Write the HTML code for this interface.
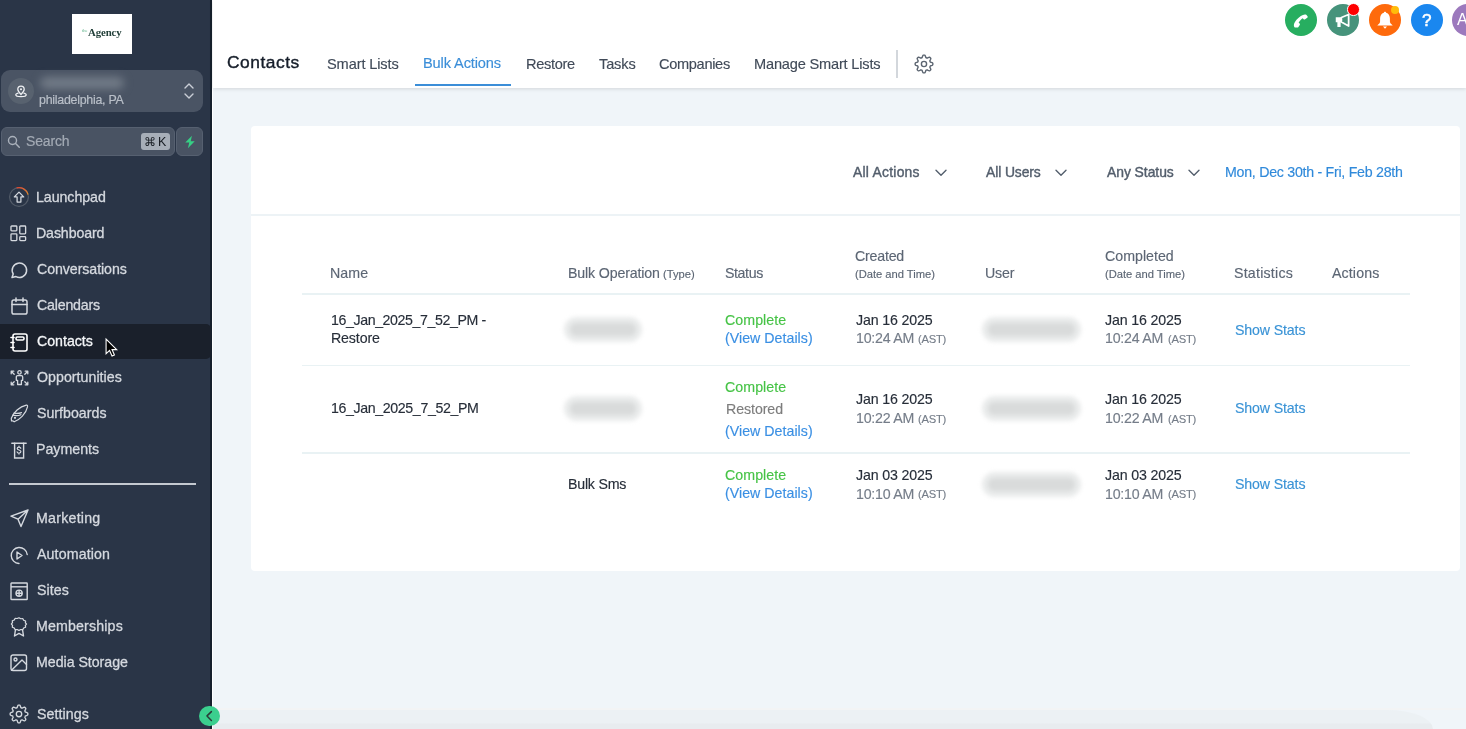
<!DOCTYPE html>
<html><head><meta charset="utf-8">
<style>
*{box-sizing:border-box;margin:0;padding:0}
html,body{width:1466px;height:729px;overflow:hidden;background:#f0f5f9;font-family:"Liberation Sans",sans-serif;position:relative}
.a{position:absolute}
.t{position:absolute;line-height:1;white-space:pre;font-family:"Liberation Sans",sans-serif;will-change:transform}
svg.i{position:absolute;overflow:visible}
.ns{fill:none;stroke:#d5d9df;stroke-width:1.5;stroke-linecap:round;stroke-linejoin:round}
.blob{position:absolute;background:#d9d9d9;filter:blur(4px);border-radius:10px}

</style></head>
<body>
<!-- sidebar -->
<div class="a" style="left:0;top:0;width:211px;height:729px;background:#2a3547"></div>
<div class="a" style="left:210.3px;top:0;width:1.5px;height:729px;background:#16202c"></div>
<div class="a" style="left:211.8px;top:0;width:1.2px;height:729px;background:#ffffff"></div>
<!-- logo -->
<div class="a" style="left:72px;top:14px;width:60px;height:40px;background:#fff"></div>
<div class="t" style="left:82px;top:28.6px;font-size:4.6px;color:#5fb38a;font-family:'Liberation Serif',serif">the</div>
<div class="t" style="left:87.8px;top:26.6px;font-size:10.8px;font-weight:bold;color:#23403a;font-family:'Liberation Serif',serif;letter-spacing:-0.1px">Agency</div>
<!-- location -->
<div class="a" style="left:1px;top:70px;width:202px;height:41.5px;border-radius:9px;background:#4a5464"></div>
<div class="a" style="left:8px;top:78px;width:26px;height:26px;border-radius:50%;background:#58626f"></div>
<svg class="i" style="left:14px;top:84px" width="14" height="14" viewBox="0 0 24 24"><path d="M12 3.5a5.5 5.5 0 0 0-5.5 5.5c0 3.5 5.5 9 5.5 9s5.5-5.5 5.5-9A5.5 5.5 0 0 0 12 3.5z" fill="none" stroke="#eef0f3" stroke-width="2.2"/><circle cx="12" cy="9" r="1.8" fill="#eef0f3"/><path d="M7 15.5c-2.5.6-4 1.6-4 2.8 0 1.9 4 3.2 9 3.2s9-1.3 9-3.2c0-1.2-1.5-2.2-4-2.8" fill="none" stroke="#eef0f3" stroke-width="2.2" stroke-linecap="round"/></svg>
<div class="blob" style="left:40px;top:77px;width:84px;height:12px;background:#727b87;filter:blur(4px);border-radius:8px"></div>
<svg class="i" style="left:183px;top:82px" width="12" height="18" viewBox="0 0 12 18"><path d="M2 6l4-4 4 4M2 12l4 4 4-4" fill="none" stroke="#c9ced6" stroke-width="1.4" stroke-linecap="round" stroke-linejoin="round"/></svg>
<!-- search -->
<div class="a" style="left:1px;top:127px;width:174px;height:28.5px;border-radius:6px;background:#495363;border:1px solid #566070"></div>
<svg class="i" style="left:7px;top:134.5px" width="14" height="14" viewBox="0 0 16 16"><circle cx="6.3" cy="6.3" r="4.6" fill="none" stroke="#aab1bb" stroke-width="1.6"/><path d="M9.8 9.8l4.2 4.2" stroke="#aab1bb" stroke-width="1.7" stroke-linecap="round"/></svg>
<div class="a" style="left:141px;top:133px;width:29px;height:16.5px;border-radius:3px;background:#a7aeb8"></div>
<div class="t" style="left:144px;top:135.5px;font-size:12px;color:#161b22">&#8984;</div>
<div class="t" style="left:158px;top:135.5px;font-size:12.5px;color:#161b22">K</div>
<div class="a" style="left:176px;top:127px;width:27px;height:28.5px;border-radius:6px;background:#495363;border:1px solid #566070"></div>
<svg class="i" style="left:182.5px;top:134.5px" width="14" height="14" viewBox="0 0 16 16"><path d="M10.2 0.8L2.6 8.6h4.6l-1.6 6.6 7.8-8.2H8.8z" fill="#36cf85"/></svg>
<!-- active nav -->
<div class="a" style="left:0;top:323.6px;width:210.6px;height:35.2px;background:#1a202b;border-radius:0 5px 5px 0"></div>
<!-- divider -->
<div class="a" style="left:9px;top:483px;width:186.5px;height:2px;background:#c4c9d0"></div>
<!-- collapse -->


<!-- nav icons -->
<svg class="i" style="left:8.8px;top:187.4px" width="20" height="20" viewBox="0 0 20 20"><defs><linearGradient id="lg" x1="0" y1="0" x2="1" y2="1"><stop offset="0" stop-color="#e2452f"/><stop offset="1" stop-color="#dd8a2c"/></linearGradient></defs><circle cx="10" cy="10" r="9.4" fill="none" stroke="#535c69" stroke-width="1.2"/><path d="M7.57 0.92A9.4 9.4 0 0 1 19.08 7.57" fill="none" stroke="url(#lg)" stroke-width="1.3"/><path d="M10 5.1L5.3 9.9h2.8v5.2h3.8V9.9h2.8z" fill="none" stroke="#d5d9df" stroke-width="1.25" stroke-linejoin="round"/></svg>
<svg class="i" style="left:10.4px;top:225px" width="16.6" height="16.6" viewBox="0 0 17 17"><g fill="none" stroke="#d5d9df" stroke-width="1.35"><rect x="1" y="1" width="6" height="5" rx="0.8"/><rect x="10" y="1" width="6" height="8" rx="0.8"/><rect x="1" y="9" width="6" height="7" rx="0.8"/><rect x="10" y="12" width="6" height="4" rx="0.8"/></g></svg>
<svg class="i" style="left:10px;top:261px" width="18" height="18" viewBox="0 0 18 18"><path d="M2 16.5l1.2-3.6A7.2 7.2 0 1 1 6 15.6z" fill="none" stroke="#d5d9df" stroke-width="1.5" stroke-linejoin="round"/></svg>
<svg class="i" style="left:10.5px;top:296.5px" width="17" height="18" viewBox="0 0 17 18"><g fill="none" stroke="#d5d9df" stroke-width="1.5" stroke-linecap="round"><rect x="1" y="3" width="15" height="14" rx="1.8"/><path d="M1 7.5h15M5 1v3.5M12 1v3.5"/></g></svg>
<svg class="i" style="left:9.5px;top:332.5px" width="18" height="19" viewBox="0 0 18 19"><g fill="none" stroke="#ffffff" stroke-width="1.6" stroke-linecap="round"><rect x="3" y="1" width="14" height="17" rx="2"/><rect x="6" y="4" width="8" height="3" rx="1.2"/><path d="M1 4.5h3M1 9.5h3M1 14.5h3"/></g></svg>
<svg class="i" style="left:9.5px;top:369.5px" width="19" height="16" viewBox="0 0 19 16"><g fill="none" stroke="#d5d9df" stroke-width="1.3" stroke-linecap="round" stroke-linejoin="round"><circle cx="9.5" cy="2.4" r="1.7"/><path d="M7.6 5.6h3.8a1.3 1.3 0 0 1 1.3 1.3v3.4h-1.3v4.2h-3.8v-4.2h-1.3V6.9a1.3 1.3 0 0 1 1.3-1.3z"/><path d="M1.2 1.2l3 3M1.2 1.2h2.6M1.2 1.2v2.6M17.8 1.2l-3 3M17.8 1.2h-2.6M17.8 1.2v2.6M1.2 14.8l3-3M1.2 14.8h2.6M1.2 14.8v-2.6M17.8 14.8l-3-3M17.8 14.8h-2.6M17.8 14.8v-2.6"/></g></svg>
<svg class="i" style="left:10px;top:404px" width="18" height="19" viewBox="0 0 18 19"><g fill="none" stroke="#d5d9df" stroke-width="1.2" stroke-linecap="round" stroke-linejoin="round"><path d="M1.3 14.2C3.5 8.5 9.5 2.5 16.3 1.1c1.2-.2 1.4.6 1.2 1.8C16 9.8 9.8 15.6 4.2 17.8l-1.2-.9-1.5.1z"/><path d="M2.6 11.2c2.2.5 5.3.9 8.3-.5M4 9.2c2.3.4 5 .5 7.5-.6"/><circle cx="5" cy="13.8" r="0.5" fill="#d5d9df"/></g></svg>
<svg class="i" style="left:10.5px;top:441.5px" width="16" height="17" viewBox="0 0 16 17"><g fill="none" stroke="#d5d9df" stroke-width="1.4" stroke-linecap="round"><path d="M0.8 1.2h14.4"/><path d="M3.6 1.2v14.8h9V1.2"/><path d="M9.8 6.3c-.3-.8-1-1.2-1.8-1.2-1 0-1.8.6-1.8 1.4 0 1.9 3.7 1.1 3.7 3.1 0 .9-.8 1.5-1.9 1.5-.9 0-1.7-.5-1.9-1.3M8 4.1v1M8 11.1v1" stroke-width="1.2"/></g></svg>
<svg class="i" style="left:9.5px;top:509px" width="19" height="19" viewBox="0 0 19 19"><path d="M18 1L1 7.2l7 3 3 7.3z M18 1L8 10.2" fill="none" stroke="#d5d9df" stroke-width="1.4" stroke-linejoin="round" stroke-linecap="round"/></svg>
<svg class="i" style="left:9.5px;top:545.5px" width="18" height="19" viewBox="0 0 18 19"><g fill="none" stroke="#d5d9df" stroke-width="1.4" stroke-linecap="round" stroke-linejoin="round"><path d="M17.2 8.5A8 8 0 1 0 9 17.5"/><path d="M7 6l5 3.5-5 3.5z"/></g></svg>
<svg class="i" style="left:9.5px;top:582px" width="18" height="18" viewBox="0 0 18 18"><g fill="none" stroke="#d5d9df" stroke-width="1.4"><rect x="1" y="1" width="16.2" height="16.5" rx="0.5"/><path d="M1 4.8h16.2"/><circle cx="9.1" cy="11.2" r="3.1"/><path d="M6 11.2h6.2M9.1 8.1v6.2"/></g></svg>
<svg class="i" style="left:11px;top:617px" width="16" height="20" viewBox="0 0 16 20"><g fill="none" stroke="#d5d9df" stroke-width="1.4" stroke-linejoin="round"><path d="M8 1l1.9 1.3 2.3-.2.9 2.1 2.1 1-.2 2.3L16.3 9l-1.3 1.8.2 2.3-2.1 1-.9 2.1-2.3-.2L8 17.3 6.1 16l-2.3.2-.9-2.1-2.1-1 .2-2.3L-.3 9 1 7.2.8 4.9l2.1-1 .9-2.1 2.3.2z" transform="translate(0.6 0) scale(0.92 0.78)"/><path d="M4.5 12.5L3.5 19l4.5-2.6 4.5 2.6-1-6.5"/></g></svg>
<svg class="i" style="left:10.1px;top:653.8px" width="17" height="17" viewBox="0 0 17 17"><g fill="none" stroke="#d5d9df" stroke-width="1.4" stroke-linejoin="round" stroke-linecap="round"><rect x="1" y="1" width="15.5" height="15.5" rx="2"/><circle cx="5.5" cy="5.5" r="1.5"/><path d="M16.5 10.5L12 6 1.5 16.3"/></g></svg>
<svg class="i" style="left:8.65px;top:704.3px" width="20" height="20" viewBox="0 0 20 20"><g fill="none" stroke="#d5d9df" stroke-width="1.35" stroke-linejoin="round"><path d="M18.85 10.00 L18.84 10.46 L18.73 10.92 L18.10 11.28 L17.37 11.57 L16.66 11.78 L16.23 12.02 L16.11 12.35 L15.98 12.66 L15.84 12.97 L15.97 13.45 L16.32 14.10 L16.63 14.82 L16.82 15.52 L16.58 15.92 L16.26 16.26 L15.92 16.58 L15.52 16.82 L14.82 16.63 L14.10 16.32 L13.45 15.97 L12.97 15.84 L12.66 15.98 L12.35 16.11 L12.02 16.23 L11.78 16.66 L11.57 17.37 L11.28 18.10 L10.92 18.73 L10.46 18.84 L10.00 18.85 L9.54 18.84 L9.08 18.73 L8.72 18.10 L8.43 17.37 L8.22 16.66 L7.98 16.23 L7.65 16.11 L7.34 15.98 L7.03 15.84 L6.55 15.97 L5.90 16.32 L5.18 16.63 L4.48 16.82 L4.08 16.58 L3.74 16.26 L3.42 15.92 L3.18 15.52 L3.37 14.82 L3.68 14.10 L4.03 13.45 L4.16 12.97 L4.02 12.66 L3.89 12.35 L3.77 12.02 L3.34 11.78 L2.63 11.57 L1.90 11.28 L1.27 10.92 L1.16 10.46 L1.15 10.00 L1.16 9.54 L1.27 9.08 L1.90 8.72 L2.63 8.43 L3.34 8.22 L3.77 7.98 L3.89 7.65 L4.02 7.34 L4.16 7.03 L4.03 6.55 L3.68 5.90 L3.37 5.18 L3.18 4.48 L3.42 4.08 L3.74 3.74 L4.08 3.42 L4.48 3.18 L5.18 3.37 L5.90 3.68 L6.55 4.03 L7.03 4.16 L7.34 4.02 L7.65 3.89 L7.98 3.77 L8.22 3.34 L8.43 2.63 L8.72 1.90 L9.08 1.27 L9.54 1.16 L10.00 1.15 L10.46 1.16 L10.92 1.27 L11.28 1.90 L11.57 2.63 L11.78 3.34 L12.02 3.77 L12.35 3.89 L12.66 4.02 L12.97 4.16 L13.45 4.03 L14.10 3.68 L14.82 3.37 L15.52 3.18 L15.92 3.42 L16.26 3.74 L16.58 4.08 L16.82 4.48 L16.63 5.18 L16.32 5.90 L15.97 6.55 L15.84 7.03 L15.98 7.34 L16.11 7.65 L16.23 7.98 L16.66 8.22 L17.37 8.43 L18.10 8.72 L18.73 9.08 L18.84 9.54Z"/><circle cx="10" cy="10" r="2.7"/></g></svg>
<!-- cursor -->
<svg class="i" style="left:105.3px;top:338.3px" width="13" height="19.5" viewBox="0 0 12 18"><path d="M1 1v13.5l3.2-3 2.3 5.2 2.2-1-2.2-5h4.3z" fill="#000" stroke="#fff" stroke-width="1" stroke-linejoin="miter"/></svg>
<!-- topbar -->
<div class="a" style="left:213px;top:0;width:1253px;height:88px;background:#fff;box-shadow:0 1px 4px rgba(0,0,0,0.13)"></div>
<div class="a" style="left:415px;top:84px;width:96px;height:2px;background:#3b8ed8"></div>
<div class="a" style="left:896.2px;top:50px;width:2px;height:28px;background:#d3d7dc"></div>
<svg class="i" style="left:913.5px;top:54.2px" width="20" height="20" viewBox="0 0 20 20"><g fill="none" stroke="#5b6470" stroke-width="1.4" stroke-linejoin="round"><path d="M18.85 10.00 L18.84 10.46 L18.73 10.92 L18.10 11.28 L17.37 11.57 L16.66 11.78 L16.23 12.02 L16.11 12.35 L15.98 12.66 L15.84 12.97 L15.97 13.45 L16.32 14.10 L16.63 14.82 L16.82 15.52 L16.58 15.92 L16.26 16.26 L15.92 16.58 L15.52 16.82 L14.82 16.63 L14.10 16.32 L13.45 15.97 L12.97 15.84 L12.66 15.98 L12.35 16.11 L12.02 16.23 L11.78 16.66 L11.57 17.37 L11.28 18.10 L10.92 18.73 L10.46 18.84 L10.00 18.85 L9.54 18.84 L9.08 18.73 L8.72 18.10 L8.43 17.37 L8.22 16.66 L7.98 16.23 L7.65 16.11 L7.34 15.98 L7.03 15.84 L6.55 15.97 L5.90 16.32 L5.18 16.63 L4.48 16.82 L4.08 16.58 L3.74 16.26 L3.42 15.92 L3.18 15.52 L3.37 14.82 L3.68 14.10 L4.03 13.45 L4.16 12.97 L4.02 12.66 L3.89 12.35 L3.77 12.02 L3.34 11.78 L2.63 11.57 L1.90 11.28 L1.27 10.92 L1.16 10.46 L1.15 10.00 L1.16 9.54 L1.27 9.08 L1.90 8.72 L2.63 8.43 L3.34 8.22 L3.77 7.98 L3.89 7.65 L4.02 7.34 L4.16 7.03 L4.03 6.55 L3.68 5.90 L3.37 5.18 L3.18 4.48 L3.42 4.08 L3.74 3.74 L4.08 3.42 L4.48 3.18 L5.18 3.37 L5.90 3.68 L6.55 4.03 L7.03 4.16 L7.34 4.02 L7.65 3.89 L7.98 3.77 L8.22 3.34 L8.43 2.63 L8.72 1.90 L9.08 1.27 L9.54 1.16 L10.00 1.15 L10.46 1.16 L10.92 1.27 L11.28 1.90 L11.57 2.63 L11.78 3.34 L12.02 3.77 L12.35 3.89 L12.66 4.02 L12.97 4.16 L13.45 4.03 L14.10 3.68 L14.82 3.37 L15.52 3.18 L15.92 3.42 L16.26 3.74 L16.58 4.08 L16.82 4.48 L16.63 5.18 L16.32 5.90 L15.97 6.55 L15.84 7.03 L15.98 7.34 L16.11 7.65 L16.23 7.98 L16.66 8.22 L17.37 8.43 L18.10 8.72 L18.73 9.08 L18.84 9.54Z"/><circle cx="10" cy="10" r="2.6"/></g></svg>
<!-- top right -->
<div class="a" style="left:1284.6px;top:4.35px;width:32px;height:32px;border-radius:50%;background:#27ae60"></div>
<svg class="i" style="left:1291px;top:10.5px" width="20" height="20" viewBox="0 0 16 16"><path d="M3 13.2c-1.3-1.4-.7-3.8 1.6-6.4S10.3 2 12.2 3l1 1.2c.3.4.2.9-.2 1.2l-1.7 1.2c-.4.3-.9.2-1.2-.1l-.7-.8c-1.2.6-2.7 2.3-3.3 3.6l.8.7c.3.3.4.8.1 1.2L5.8 12.9c-.3.4-.8.5-1.2.2z" fill="#fff"/></svg>
<div class="a" style="left:1326.5px;top:4.35px;width:32px;height:32px;border-radius:50%;background:#46937b"></div>
<svg class="i" style="left:1333px;top:11px" width="20" height="20" viewBox="0 0 16 16"><path d="M2.2 5H6.6V9H6.1V12.7H3.5V9H2.2z" fill="#fff"/><path d="M6.7 5.2L12.5 2.8V12L6.7 8.8z" fill="none" stroke="#fff" stroke-width="1.4" stroke-linejoin="round"/></svg>
<div class="a" style="left:1347.45px;top:3.15px;width:12.5px;height:12.5px;border-radius:50%;background:#ff0000;border:1.2px solid #fff"></div>
<div class="a" style="left:1368.5px;top:4.35px;width:32px;height:32px;border-radius:50%;background:#fe6a0c"></div>
<svg class="i" style="left:1375.5px;top:11px" width="18" height="19" viewBox="0 0 16 17"><path d="M8 0.6c-.6 0-1 .4-1 .9C4.6 2.2 3.6 4.3 3.6 6.8v2.6c0 1.2-.9 2.2-2.5 3.5h13.8c-1.6-1.3-2.5-2.3-2.5-3.5V6.8c0-2.5-1-4.6-3.4-5.3 0-.5-.4-.9-1-.9z" fill="#fff"/><path d="M6.2 13.9h3.6L8 15.9z" fill="#fff"/></svg>
<div class="a" style="left:1390.5px;top:6.2px;width:8px;height:8px;border-radius:50%;background:#ffbc0a"></div>
<div class="a" style="left:1410.6px;top:4.35px;width:32px;height:32px;border-radius:50%;background:#1a87ef"></div>
<div class="t" style="left:1421.6px;top:12px;font-size:17px;color:#fff;-webkit-text-stroke:0.6px #fff">?</div>
<div class="a" style="left:1452.2px;top:4.35px;width:32px;height:32px;border-radius:50%;background:#9c79bd"></div>
<div class="t" style="left:1457px;top:11.5px;font-size:16px;color:#fff">A</div>
<!-- card -->
<div class="a" style="left:251.3px;top:125.8px;width:1208.7px;height:445.2px;background:#fff;border-radius:4px"></div>
<div class="a" style="left:251.3px;top:214px;width:1208.7px;height:1.5px;background:#edf3f6"></div>
<svg class="i" style="left:934.6px;top:169.2px" width="12" height="7.5" viewBox="0 0 12 7.5"><path d="M1 1.2l5 5 5-5" fill="none" stroke="#535e6c" stroke-width="1.4" stroke-linecap="round" stroke-linejoin="round"/></svg>
<svg class="i" style="left:1055.4px;top:169.2px" width="12" height="7.5" viewBox="0 0 12 7.5"><path d="M1 1.2l5 5 5-5" fill="none" stroke="#535e6c" stroke-width="1.4" stroke-linecap="round" stroke-linejoin="round"/></svg>
<svg class="i" style="left:1188.3px;top:169.2px" width="12" height="7.5" viewBox="0 0 12 7.5"><path d="M1 1.2l5 5 5-5" fill="none" stroke="#535e6c" stroke-width="1.4" stroke-linecap="round" stroke-linejoin="round"/></svg>
<!-- table borders -->
<div class="a" style="left:302px;top:293px;width:1108px;height:2px;background:#e9f2f4"></div>
<div class="a" style="left:302px;top:364.5px;width:1108px;height:1.5px;background:#e9f2f4"></div>
<div class="a" style="left:302px;top:452px;width:1108px;height:1.5px;background:#e9f2f4"></div>
<!-- blobs -->
<div class="blob" style="left:570px;top:323.2px;width:66px;height:13px;border-radius:7px;background:#d9dbdb;box-shadow:0 0 0 6px #e9ebeb;filter:blur(2.2px)"></div>
<div class="blob" style="left:570px;top:402.2px;width:66px;height:13px;border-radius:7px;background:#d9dbdb;box-shadow:0 0 0 6px #e9ebeb;filter:blur(2.2px)"></div>
<div class="blob" style="left:988px;top:323.2px;width:87px;height:13px;border-radius:7px;background:#d9dbdb;box-shadow:0 0 0 6px #e9ebeb;filter:blur(2.2px)"></div>
<div class="blob" style="left:988px;top:402.2px;width:87px;height:13px;border-radius:7px;background:#d9dbdb;box-shadow:0 0 0 6px #e9ebeb;filter:blur(2.2px)"></div>
<div class="blob" style="left:988px;top:477.7px;width:87px;height:13px;border-radius:7px;background:#d9dbdb;box-shadow:0 0 0 6px #e9ebeb;filter:blur(2.2px)"></div>
<!-- bottom band -->
<div class="a" style="left:213px;top:708px;width:1253px;height:1.5px;background:#f3f4f5"></div>
<div class="a" style="left:213px;top:710px;width:1220px;height:19px;background:linear-gradient(#ecf1f4 0,#ecf1f4 70%,#e8ecef 72%,#e8ecef 100%);border-top-right-radius:50px 21px"></div>

<div class="a" style="left:199.2px;top:705.6px;width:20.6px;height:20.6px;border-radius:50%;background:#3bcf8e"></div>
<svg class="i" style="left:203.5px;top:710px" width="12" height="12" viewBox="0 0 12 12"><path d="M7.4 1.6L3 5.9l4.4 4.6" fill="none" stroke="#2b3a37" stroke-width="1.5" stroke-linecap="round" stroke-linejoin="round"/></svg>

<div class="t" style="left:36.41px;top:190.18px;font-size:14.2px;color:#d5d9df;letter-spacing:-0.049px;-webkit-text-stroke:0.3px #d5d9df;">Launchpad</div>
<div class="t" style="left:36.41px;top:226.18px;font-size:14.2px;color:#d5d9df;letter-spacing:-0.123px;-webkit-text-stroke:0.3px #d5d9df;">Dashboard</div>
<div class="t" style="left:36.84px;top:262.18px;font-size:14.2px;color:#d5d9df;letter-spacing:-0.073px;-webkit-text-stroke:0.3px #d5d9df;">Conversations</div>
<div class="t" style="left:36.84px;top:298.18px;font-size:14.2px;color:#d5d9df;letter-spacing:-0.192px;-webkit-text-stroke:0.3px #d5d9df;">Calendars</div>
<div class="t" style="left:36.84px;top:334.18px;font-size:14.2px;color:#f4f6f8;letter-spacing:-0.022px;-webkit-text-stroke:0.3px #f4f6f8;">Contacts</div>
<div class="t" style="left:36.98px;top:370.18px;font-size:14.2px;color:#d5d9df;letter-spacing:0.032px;-webkit-text-stroke:0.3px #d5d9df;">Opportunities</div>
<div class="t" style="left:36.98px;top:406.18px;font-size:14.2px;color:#d5d9df;letter-spacing:0.009px;-webkit-text-stroke:0.3px #d5d9df;">Surfboards</div>
<div class="t" style="left:36.41px;top:442.18px;font-size:14.2px;color:#d5d9df;-webkit-text-stroke:0.3px #d5d9df;">Payments</div>
<div class="t" style="left:36.31px;top:511.28px;font-size:14.2px;color:#d5d9df;letter-spacing:0.242px;-webkit-text-stroke:0.3px #d5d9df;">Marketing</div>
<div class="t" style="left:37.45px;top:547.28px;font-size:14.2px;color:#d5d9df;letter-spacing:0.135px;-webkit-text-stroke:0.3px #d5d9df;">Automation</div>
<div class="t" style="left:36.88px;top:583.28px;font-size:14.2px;color:#d5d9df;letter-spacing:0.094px;-webkit-text-stroke:0.3px #d5d9df;">Sites</div>
<div class="t" style="left:36.31px;top:619.28px;font-size:14.2px;color:#d5d9df;letter-spacing:0.158px;-webkit-text-stroke:0.3px #d5d9df;">Memberships</div>
<div class="t" style="left:36.31px;top:655.28px;font-size:14.2px;color:#d5d9df;letter-spacing:-0.030px;-webkit-text-stroke:0.3px #d5d9df;">Media Storage</div>
<div class="t" style="left:36.88px;top:706.98px;font-size:14.2px;color:#d5d9df;letter-spacing:0.091px;-webkit-text-stroke:0.3px #d5d9df;">Settings</div>
<div class="t" style="left:38.86px;top:94.00px;font-size:12.4px;color:#b9bfc8;letter-spacing:-0.253px;-webkit-text-stroke:0.2px #b9bfc8;">philadelphia, PA</div>
<div class="t" style="left:25.74px;top:134.05px;font-size:14px;color:#a3aab4;letter-spacing:-0.162px;-webkit-text-stroke:0.2px #a3aab4;">Search</div>
<div class="t" style="left:227.13px;top:53.87px;font-size:17.4px;color:#161e2a;letter-spacing:0.504px;-webkit-text-stroke:0.4px #161e2a;">Contacts</div>
<div class="t" style="left:327.49px;top:56.94px;font-size:14.6px;color:#404a58;letter-spacing:-0.122px;-webkit-text-stroke:0.15px #404a58;">Smart Lists</div>
<div class="t" style="left:423.11px;top:55.94px;font-size:14.6px;color:#3b8ed8;letter-spacing:-0.123px;-webkit-text-stroke:0.15px #3b8ed8;">Bulk Actions</div>
<div class="t" style="left:525.81px;top:57.04px;font-size:14.6px;color:#404a58;letter-spacing:-0.342px;-webkit-text-stroke:0.15px #404a58;">Restore</div>
<div class="t" style="left:598.78px;top:57.04px;font-size:14.6px;color:#404a58;letter-spacing:-0.154px;-webkit-text-stroke:0.15px #404a58;">Tasks</div>
<div class="t" style="left:659.14px;top:57.04px;font-size:14.6px;color:#404a58;letter-spacing:-0.326px;-webkit-text-stroke:0.15px #404a58;">Companies</div>
<div class="t" style="left:753.51px;top:57.04px;font-size:14.6px;color:#404a58;letter-spacing:-0.185px;-webkit-text-stroke:0.15px #404a58;">Manage Smart Lists</div>
<div class="t" style="left:853.20px;top:165.53px;font-size:13.9px;color:#535e6c;letter-spacing:0.243px;-webkit-text-stroke:0.4px #535e6c;">All Actions</div>
<div class="t" style="left:986.40px;top:165.53px;font-size:13.9px;color:#535e6c;letter-spacing:-0.099px;-webkit-text-stroke:0.4px #535e6c;">All Users</div>
<div class="t" style="left:1107.10px;top:165.53px;font-size:13.9px;color:#535e6c;letter-spacing:-0.045px;-webkit-text-stroke:0.4px #535e6c;">Any Status</div>
<div class="t" style="left:1225.24px;top:165.28px;font-size:14.2px;color:#2f89da;letter-spacing:-0.266px;-webkit-text-stroke:0.15px #2f89da;">Mon, Dec 30th - Fri, Feb 28th</div>
<div class="t" style="left:330.44px;top:266.08px;font-size:14.2px;color:#5c6674;letter-spacing:0.082px;-webkit-text-stroke:0.15px #5c6674;">Name</div>
<div class="t" style="left:568.24px;top:266.08px;font-size:14.2px;color:#5c6674;letter-spacing:-0.148px;-webkit-text-stroke:0.15px #5c6674;">Bulk Operation</div>
<div class="t" style="left:663.40px;top:268.62px;font-size:11.2px;color:#5c6674;letter-spacing:0.020px;-webkit-text-stroke:0.15px #5c6674;">(Type)</div>
<div class="t" style="left:725.01px;top:266.08px;font-size:14.2px;color:#5c6674;letter-spacing:-0.397px;-webkit-text-stroke:0.15px #5c6674;">Status</div>
<div class="t" style="left:855.16px;top:248.88px;font-size:14.2px;color:#5c6674;letter-spacing:-0.206px;-webkit-text-stroke:0.15px #5c6674;">Created</div>
<div class="t" style="left:855.20px;top:268.92px;font-size:11.2px;color:#5c6674;letter-spacing:-0.019px;-webkit-text-stroke:0.15px #5c6674;">(Date and Time)</div>
<div class="t" style="left:984.68px;top:266.28px;font-size:14.2px;color:#5c6674;letter-spacing:-0.176px;-webkit-text-stroke:0.15px #5c6674;">User</div>
<div class="t" style="left:1104.66px;top:248.88px;font-size:14.2px;color:#5c6674;letter-spacing:0.014px;-webkit-text-stroke:0.15px #5c6674;">Completed</div>
<div class="t" style="left:1104.70px;top:268.92px;font-size:11.2px;color:#5c6674;letter-spacing:-0.019px;-webkit-text-stroke:0.15px #5c6674;">(Date and Time)</div>
<div class="t" style="left:1234.31px;top:266.28px;font-size:14.2px;color:#5c6674;letter-spacing:0.228px;-webkit-text-stroke:0.15px #5c6674;">Statistics</div>
<div class="t" style="left:1331.78px;top:266.28px;font-size:14.2px;color:#5c6674;letter-spacing:0.122px;-webkit-text-stroke:0.15px #5c6674;">Actions</div>
<div class="t" style="left:330.68px;top:313.28px;font-size:14.2px;color:#272e39;letter-spacing:-0.403px;-webkit-text-stroke:0.15px #272e39;">16_Jan_2025_7_52_PM -</div>
<div class="t" style="left:330.54px;top:331.48px;font-size:14.2px;color:#272e39;letter-spacing:-0.133px;-webkit-text-stroke:0.15px #272e39;">Restore</div>
<div class="t" style="left:724.87px;top:313.28px;font-size:14.2px;color:#46c346;letter-spacing:0.061px;-webkit-text-stroke:0.15px #46c346;">Complete</div>
<div class="t" style="left:724.72px;top:331.48px;font-size:14.2px;color:#3a8fe3;letter-spacing:0.027px;-webkit-text-stroke:0.15px #3a8fe3;">(View Details)</div>
<div class="t" style="left:855.73px;top:312.78px;font-size:14.2px;color:#272e39;letter-spacing:-0.134px;-webkit-text-stroke:0.15px #272e39;">Jan 16 2025</div>
<div class="t" style="left:855.58px;top:331.28px;font-size:14.2px;color:#757d89;letter-spacing:-0.239px;-webkit-text-stroke:0.15px #757d89;">10:24 AM</div>
<div class="t" style="left:918.40px;top:333.82px;font-size:11.2px;color:#757d89;letter-spacing:-0.225px;-webkit-text-stroke:0.15px #757d89;">(AST)</div>
<div class="t" style="left:1105.23px;top:312.78px;font-size:14.2px;color:#272e39;letter-spacing:-0.134px;-webkit-text-stroke:0.15px #272e39;">Jan 16 2025</div>
<div class="t" style="left:1105.08px;top:331.28px;font-size:14.2px;color:#757d89;letter-spacing:-0.239px;-webkit-text-stroke:0.15px #757d89;">10:24 AM</div>
<div class="t" style="left:1167.90px;top:333.82px;font-size:11.2px;color:#757d89;letter-spacing:-0.225px;-webkit-text-stroke:0.15px #757d89;">(AST)</div>
<div class="t" style="left:1234.51px;top:322.78px;font-size:14.2px;color:#3a93d6;letter-spacing:-0.140px;-webkit-text-stroke:0.15px #3a93d6;">Show Stats</div>
<div class="t" style="left:855.73px;top:392.48px;font-size:14.2px;color:#272e39;letter-spacing:-0.134px;-webkit-text-stroke:0.15px #272e39;">Jan 16 2025</div>
<div class="t" style="left:855.58px;top:411.08px;font-size:14.2px;color:#757d89;letter-spacing:-0.239px;-webkit-text-stroke:0.15px #757d89;">10:22 AM</div>
<div class="t" style="left:918.40px;top:413.62px;font-size:11.2px;color:#757d89;letter-spacing:-0.225px;-webkit-text-stroke:0.15px #757d89;">(AST)</div>
<div class="t" style="left:1105.23px;top:392.48px;font-size:14.2px;color:#272e39;letter-spacing:-0.134px;-webkit-text-stroke:0.15px #272e39;">Jan 16 2025</div>
<div class="t" style="left:1105.08px;top:411.08px;font-size:14.2px;color:#757d89;letter-spacing:-0.239px;-webkit-text-stroke:0.15px #757d89;">10:22 AM</div>
<div class="t" style="left:1167.90px;top:413.62px;font-size:11.2px;color:#757d89;letter-spacing:-0.225px;-webkit-text-stroke:0.15px #757d89;">(AST)</div>
<div class="t" style="left:1234.51px;top:401.48px;font-size:14.2px;color:#3a93d6;letter-spacing:-0.140px;-webkit-text-stroke:0.15px #3a93d6;">Show Stats</div>
<div class="t" style="left:855.73px;top:467.98px;font-size:14.2px;color:#272e39;letter-spacing:-0.134px;-webkit-text-stroke:0.15px #272e39;">Jan 03 2025</div>
<div class="t" style="left:855.58px;top:486.58px;font-size:14.2px;color:#757d89;letter-spacing:-0.239px;-webkit-text-stroke:0.15px #757d89;">10:10 AM</div>
<div class="t" style="left:918.40px;top:489.12px;font-size:11.2px;color:#757d89;letter-spacing:-0.225px;-webkit-text-stroke:0.15px #757d89;">(AST)</div>
<div class="t" style="left:1105.23px;top:467.98px;font-size:14.2px;color:#272e39;letter-spacing:-0.134px;-webkit-text-stroke:0.15px #272e39;">Jan 03 2025</div>
<div class="t" style="left:1105.08px;top:486.58px;font-size:14.2px;color:#757d89;letter-spacing:-0.239px;-webkit-text-stroke:0.15px #757d89;">10:10 AM</div>
<div class="t" style="left:1167.90px;top:489.12px;font-size:11.2px;color:#757d89;letter-spacing:-0.225px;-webkit-text-stroke:0.15px #757d89;">(AST)</div>
<div class="t" style="left:1234.51px;top:476.68px;font-size:14.2px;color:#3a93d6;letter-spacing:-0.140px;-webkit-text-stroke:0.15px #3a93d6;">Show Stats</div>
<div class="t" style="left:330.68px;top:401.48px;font-size:14.2px;color:#272e39;letter-spacing:-0.375px;-webkit-text-stroke:0.15px #272e39;">16_Jan_2025_7_52_PM</div>
<div class="t" style="left:724.87px;top:379.98px;font-size:14.2px;color:#46c346;letter-spacing:0.061px;-webkit-text-stroke:0.15px #46c346;">Complete</div>
<div class="t" style="left:725.74px;top:401.58px;font-size:14.2px;color:#7d7d7d;letter-spacing:-0.073px;-webkit-text-stroke:0.15px #7d7d7d;">Restored</div>
<div class="t" style="left:724.72px;top:424.08px;font-size:14.2px;color:#3a8fe3;letter-spacing:0.027px;-webkit-text-stroke:0.15px #3a8fe3;">(View Details)</div>
<div class="t" style="left:568.14px;top:477.38px;font-size:14.2px;color:#272e39;letter-spacing:-0.219px;-webkit-text-stroke:0.15px #272e39;">Bulk Sms</div>
<div class="t" style="left:724.87px;top:467.98px;font-size:14.2px;color:#46c346;letter-spacing:0.061px;-webkit-text-stroke:0.15px #46c346;">Complete</div>
<div class="t" style="left:724.72px;top:486.28px;font-size:14.2px;color:#3a8fe3;letter-spacing:0.027px;-webkit-text-stroke:0.15px #3a8fe3;">(View Details)</div>
</body></html>
